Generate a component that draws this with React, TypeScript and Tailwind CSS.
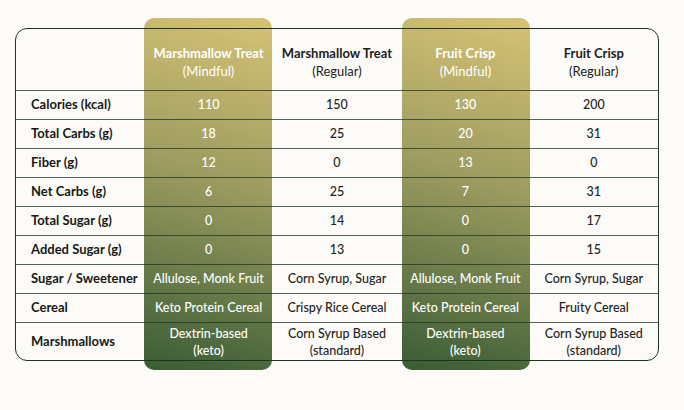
const columns = [
  { name: "Marshmallow Treat", kind: "(Mindful)", mindful: true },
  { name: "Marshmallow Treat", kind: "(Regular)", mindful: false },
  { name: "Fruit Crisp", kind: "(Mindful)", mindful: true },
  { name: "Fruit Crisp", kind: "(Regular)", mindful: false },
]

const rows: { label: string; values: string[][] }[] = [
  { label: "Calories (kcal)", values: [["110"], ["150"], ["130"], ["200"]] },
  { label: "Total Carbs (g)", values: [["18"], ["25"], ["20"], ["31"]] },
  { label: "Fiber (g)", values: [["12"], ["0"], ["13"], ["0"]] },
  { label: "Net Carbs (g)", values: [["6"], ["25"], ["7"], ["31"]] },
  { label: "Total Sugar (g)", values: [["0"], ["14"], ["0"], ["17"]] },
  { label: "Added Sugar (g)", values: [["0"], ["13"], ["0"], ["15"]] },
  {
    label: "Sugar / Sweetener",
    values: [["Allulose, Monk Fruit"], ["Corn Syrup, Sugar"], ["Allulose, Monk Fruit"], ["Corn Syrup, Sugar"]],
  },
  {
    label: "Cereal",
    values: [["Keto Protein Cereal"], ["Crispy Rice Cereal"], ["Keto Protein Cereal"], ["Fruity Cereal"]],
  },
  {
    label: "Marshmallows",
    values: [
      ["Dextrin-based", "(keto)"],
      ["Corn Syrup Based", "(standard)"],
      ["Dextrin-based", "(keto)"],
      ["Corn Syrup Based", "(standard)"],
    ],
  },
]

export default function App() {
  return (
    <div className="w-[684px] h-[410px] bg-[#fcfbf7] pt-[28px] pl-[15px] font-['Lato','Noto_Sans',sans-serif] text-[#1c211c]">
      <div className="relative w-[644px]">
        {/* highlighted mindful columns, sit behind the grid lines */}
        <div className="absolute left-[129px] -top-[10px] -bottom-[9px] w-[128px] rounded-[10px] bg-[linear-gradient(196deg,#d6c275,#9d9c60_45%,#3a5c35)]" />
        <div className="absolute left-[387px] -top-[10px] -bottom-[9px] w-[128px] rounded-[10px] bg-[linear-gradient(196deg,#d6c275,#9d9c60_45%,#3a5c35)]" />

        <div className="relative rounded-[12px] border-[1.5px] border-[#1d3421]">
          <div className="grid grid-cols-5 h-[61px] items-center text-center text-[13px] leading-[18px]">
            <div />
            {columns.map((c, i) => (
              <div key={i} className={c.mindful ? "pt-1 text-white" : "pt-1 text-[#1c211c]"}>
                <div className="font-bold">{c.name}</div>
                <div>{c.kind}</div>
              </div>
            ))}
          </div>

          {rows.map((r, ri) => (
            <div
              key={r.label}
              className={
                "grid grid-cols-5 items-center border-t border-[#1d3421]/75 text-[12.5px] " +
                (ri === rows.length - 1 ? "h-[38px] leading-[17px]" : "h-[29px]")
              }
            >
              <div className="pl-[15px] text-[13px] font-bold text-[#161a16]">{r.label}</div>
              {r.values.map((v, ci) => (
                <div
                  key={ci}
                  className={
                    "text-center font-medium " +
                    (columns[ci].mindful ? "text-white" : "text-[#1f241f]")
                  }
                >
                  {v.map((line) => (
                    <div key={line}>{line}</div>
                  ))}
                </div>
              ))}
            </div>
          ))}
        </div>
      </div>
    </div>
  )
}
